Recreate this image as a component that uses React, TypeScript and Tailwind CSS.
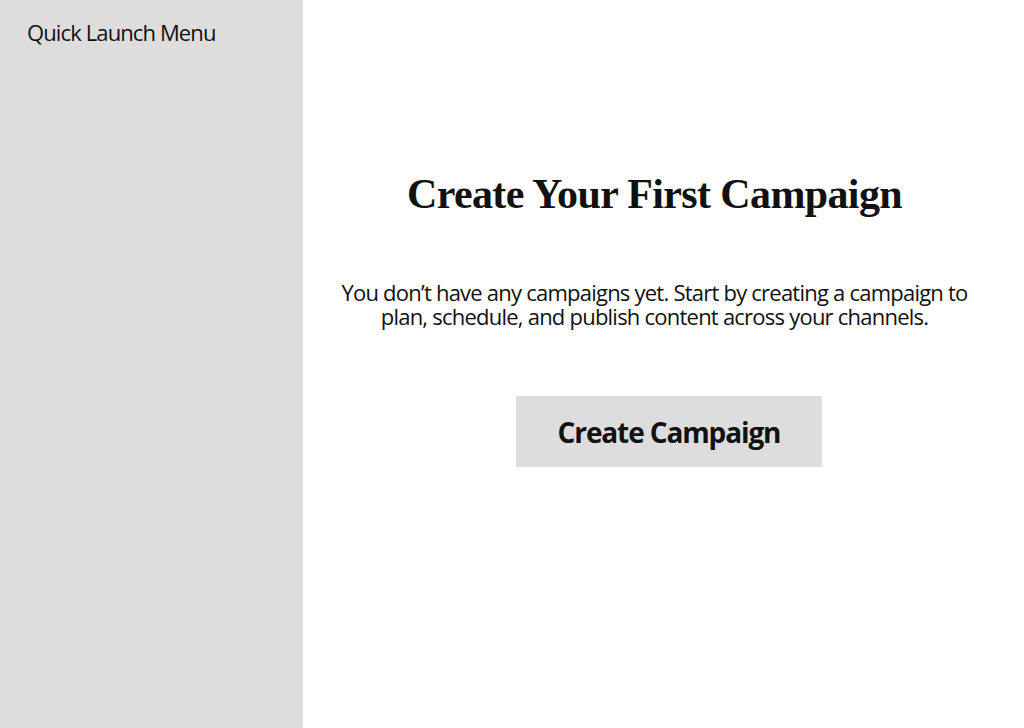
export default function App() {
  return (
    <div className="flex h-[728px] w-[1024px] bg-white text-[#111]">
      {/* sidebar */}
      <aside className="w-[303px] shrink-0 bg-[#dddddd] pl-[27px] pt-[18px]">
        <p className="font-['Open_Sans',sans-serif] text-[22px] leading-[28px] tracking-[-0.04em]">
          Quick Launch Menu
        </p>
      </aside>

      {/* empty state */}
      <main className="flex flex-1 flex-col items-center pt-[166px]">
        <h1 className="pr-[18px] font-['Liberation_Serif',serif] text-[42px] font-bold leading-[56px] tracking-[-0.015em]">
          Create Your First Campaign
        </h1>
        <p className="mt-[58px] w-[668px] pr-[18px] text-center font-['Open_Sans',sans-serif] text-[22px] leading-[24px] tracking-[-0.035em]">
          You don’t have any campaigns yet. Start by creating a campaign to plan, schedule, and publish content across your
          channels.
        </p>
        <button className="ml-[11px] mt-[68px] flex h-[71px] w-[306px] items-center justify-center bg-[#dddddd] font-['Open_Sans',sans-serif] text-[28px] font-bold tracking-[-0.04em]">
          Create Campaign
        </button>
      </main>
    </div>
  )
}
